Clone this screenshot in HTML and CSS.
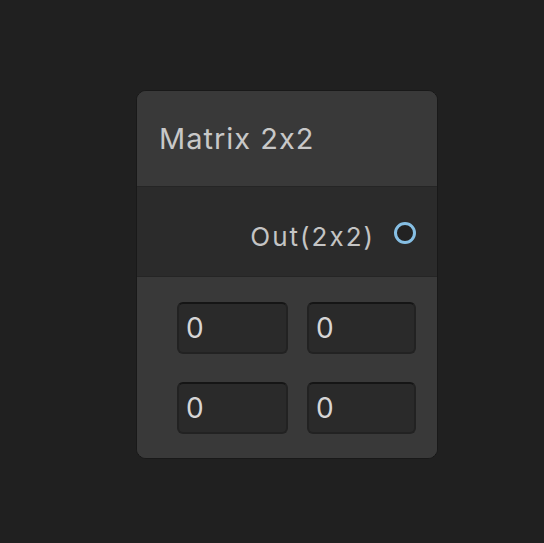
FILE: index.html
```html
<!DOCTYPE html>
<html>
<head>
<meta charset="utf-8">
<link rel="stylesheet" href="styles.css">
</head>
<body>
<div class="canvas">
  <div class="node">
    <div class="node-title">Matrix 2x2</div>
    <div class="node-ports">
      <span class="port-label">Out(2x2)</span>
      <span class="port-dot"></span>
    </div>
    <div class="node-body">
      <div class="field">0</div>
      <div class="field">0</div>
      <div class="field">0</div>
      <div class="field">0</div>
    </div>
  </div>
</div>
</body>
</html>
```

FILE: styles.css
```css
html, body {
  margin: 0;
  padding: 0;
  background: #202020;
  height: 100%;
}

.canvas {
  padding: 90px 0 0 136px;
  font-family: Inter, "Noto Sans", sans-serif;
  font-feature-settings: "calt" 0;
  color: #c4c4c4;
}

.node {
  width: 300px;
  border: 1px solid #191919;
  border-radius: 10px;
  overflow: hidden;
  background: #393939;
}

.node-title {
  height: 96px;
  box-sizing: border-box;
  padding: 30px 0 0 22px;
  font-size: 29px;
  line-height: 36px;
  letter-spacing: 1px;
  color: #c8c8c8;
  background: #393939;
  border-bottom: 1px solid #252525;
}

.node-ports {
  height: 90px;
  box-sizing: border-box;
  display: flex;
  align-items: flex-start;
  justify-content: flex-end;
  padding: 34px 21px 0 0;
  background: #2b2b2b;
  border-bottom: 1px solid #252525;
}

.port-label {
  font-size: 26px;
  line-height: 32px;
  color: #c4c4c4;
  letter-spacing: 2px;
}

.port-dot {
  width: 16px;
  height: 16px;
  margin: 1px 0 0 19px;
  border: 3px solid #86bfe4;
  border-radius: 50%;
  background: #222222;
}

.node-body {
  display: grid;
  grid-template-columns: 111px 109px;
  grid-auto-rows: 52px;
  column-gap: 19px;
  row-gap: 28px;
  padding: 25px 21px 24px 40px;
  background: #393939;
}

.field {
  box-sizing: border-box;
  border: 2px solid #222222;
  border-top-color: #151515;
  border-radius: 6px;
  background: #2a2a2a;
  font-size: 28px;
  line-height: 48px;
  padding-left: 7px;
  color: #d6d6d6;
}
```
